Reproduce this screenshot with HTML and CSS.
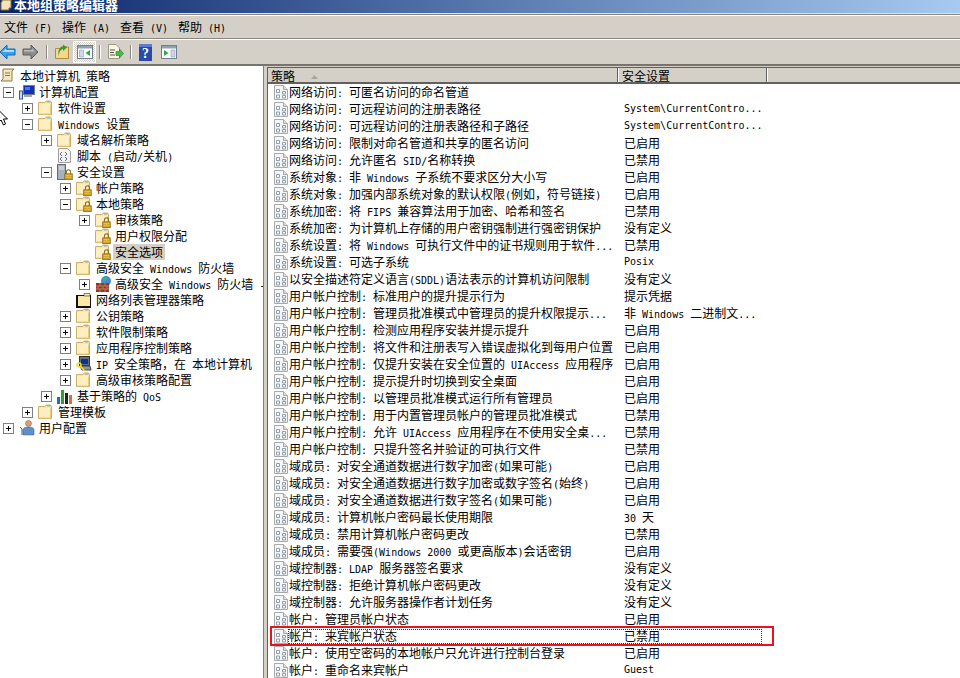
FILE: index.html
```html
<!DOCTYPE html>
<html lang="zh-CN">
<head>
<meta charset="utf-8">
<title>本地组策略编辑器</title>
<link rel="stylesheet" href="styles.css">
</head>
<body>
<svg class="defs" width="0" height="0" aria-hidden="true">
  <defs>
    <symbol id="folder" viewBox="0 0 16 16">
      <path d="M0.500 3.500V2.500H7L8 1H12.500L13.500 2.500V14.500H0.500Z" fill="#fbe7a8" stroke="#c9ad68"/>
      <path d="M1 4H13V14H1Z" fill="#fdefc0"/>
      <path d="M9 1.500H12.500V2.500H9Z" fill="#6fa8dc"/>
      <path d="M12.500 4.500V14H1.500" fill="none" stroke="#ecca78"/>
    </symbol>
    <symbol id="lock" viewBox="0 0 13 16">
      <path d="M3.500 7V4A3 3 0 0 1 9.500 4V7" fill="none" stroke="#8a6a1a" stroke-width="1.500"/>
      <rect x="1" y="7" width="11" height="8.500" fill="#cfa02a" stroke="#7f6010"/>
      <path d="M2.500 9.500H10.500M2.500 12H10.500" stroke="#f0d060"/>
    </symbol>
    <symbol id="policy" viewBox="0 0 16 16">
      <path d="M1.500 0.500H10.500L14.500 4.500V14.500H1.500Z" fill="#f6f6f6" stroke="#a9a9a9"/>
      <path d="M10.500 0.500V4.500H14.500" fill="#ddd" stroke="#a9a9a9"/>
      <path d="M3.500 4.500H6.500V7.500H3.500ZM3.500 10H6.500V13H3.500ZM9.500 6.500H12.500V9H9.500ZM9.500 10.500H12.500V13H9.500Z" fill="#fff" stroke="#8f9cae"/>
    </symbol>
  </defs>
</svg>

<header class="titlebar">
  <svg class="title-icon" width="12" height="11" viewBox="0 0 12 11"><path d="M2 0H11V8H9V10H1V2H2Z" fill="#f3e5b8" stroke="#8a6d3b"/></svg>
  <span class="title-text">本地组策略编辑器</span>
</header>

<nav class="menubar">
  <span class="menu-item">文件<span class="lat"> (F)</span></span>
  <span class="menu-item">操作<span class="lat"> (A)</span></span>
  <span class="menu-item">查看<span class="lat"> (V)</span></span>
  <span class="menu-item">帮助<span class="lat"> (H)</span></span>
</nav>

<div class="toolbar">
  <svg class="tool tool-nav" width="16" height="16" viewBox="0 0 16 16"><path d="M0 8L7 1V5H15V11H7V15Z" fill="#3aa0ea" stroke="#0f6cb8"/><path d="M2 8L6 4.500V6H14V8Z" fill="#a8dcfa"/></svg>
  <svg class="tool tool-nav" width="16" height="16" viewBox="0 0 16 16"><path d="M16 8L9 1V5H1V11H9V15Z" fill="#8c8c8c" stroke="#5d5d5d"/><path d="M2 6H10V4.500L13 7.500H2Z" fill="#bdbdbd"/></svg>
  <span class="tool-sep"></span>
  <svg class="tool" width="16" height="16" viewBox="0 0 16 16"><path d="M1.500 4.500H7V3H14.500V14.500H1.500Z" fill="#f4d78a" stroke="#b08d3e"/><path d="M5 12C5 8 6 6 9 5V7L13 3.500L9 0.500V2.500C5 3.500 3.500 7 5 12Z" fill="#2f9e2f"/></svg>
  <span class="tool-active">
    <svg width="16" height="16" viewBox="0 0 16 16"><rect x="0.500" y="1.500" width="15" height="13" fill="#fff" stroke="#6f7f8f"/><path d="M1 2H15V4.500H1Z" fill="#8fa3b5"/><path d="M2.500 6H6.500V13H2.500Z" fill="#cdd9e5" stroke="#7d8fa1" stroke-width="0.500"/><path d="M13 6V12L8.500 9Z" fill="#2ea84a"/></svg>
  </span>
  <span class="tool-sep"></span>
  <svg class="tool tool-export" width="17" height="16" viewBox="0 0 17 16"><path d="M1.500 0.500H9L12.500 4V14.500H1.500Z" fill="#fbf6e0" stroke="#9a9a86"/><path d="M3 6H8M3 8.500H7M3 11H8" stroke="#555"/><path d="M9 7.500H12.500V5L16.500 9.500L12.500 14V11.500H9Z" fill="#4cb84c" stroke="#2f8f2f" stroke-width="0.700"/></svg>
  <span class="tool-sep"></span>
  <svg class="tool tool-help" width="13" height="17" viewBox="0 0 13 17"><rect width="13" height="17" fill="#2b4aa8"/><path d="M0 0H13V3H0Z" fill="#5b7bd0"/><text class="help-glyph" x="6.500" y="14" text-anchor="middle">?</text></svg>
  <svg class="tool tool-action" width="16" height="16" viewBox="0 0 16 16"><rect x="0.500" y="1.500" width="15" height="13" fill="#fff" stroke="#6f7f8f"/><path d="M1 2H15V4.500H1Z" fill="#8fa3b5"/><path d="M10 6H14V13H10Z" fill="#cdd9e5" stroke="#7d8fa1" stroke-width="0.500"/><path d="M3 6V12L7.500 9Z" fill="#2ea84a"/></svg>
</div>

<main class="panes">
  <section class="tree">
    <div class="node l-root"><span class="ico"><svg width="15" height="15" viewBox="0 0 15 15"><path d="M3 1H14L12 3V13H1L3 11Z" fill="#f3e6bd" stroke="#8a7a4d"/><path d="M5 5H10M5 7.500H10" stroke="#8a7a4d"/></svg></span><span class="label">本地计算机<span class="lat"> </span>策略</span></div>
    <div class="node l1"><span class="exp minus"></span><span class="ico"><svg width="16" height="16" viewBox="0 0 16 16"><rect x="0.500" y="7" width="3" height="8" fill="#cfd8e3" stroke="#335b99"/><rect x="4.500" y="1.500" width="11" height="9" fill="#1230b8" stroke="#6f7f8f"/><path d="M6 3H11V6H6Z" fill="#3f7ff0"/><path d="M7 11H13V13H5V11Z" fill="#9aa7b5"/></svg></span><span class="label">计算机配置</span></div>
    <div class="node l2"><span class="exp plus"></span><span class="ico"><svg width="16" height="16"><use href="#folder"/></svg></span><span class="label">软件设置</span></div>
    <div class="node l2"><span class="exp minus"></span><span class="ico"><svg width="16" height="16"><use href="#folder"/></svg></span><span class="label"><span class="lat">Windows </span>设置</span></div>
    <div class="node l3"><span class="exp plus"></span><span class="ico"><svg width="16" height="16"><use href="#folder"/></svg></span><span class="label">域名解析策略</span></div>
    <div class="node l3"><span class="exp none"></span><span class="ico"><svg width="16" height="16" viewBox="0 0 16 16"><path d="M1.500 0.500H10.500L13.500 3.500V14.500H1.500Z" fill="#f3f3f3" stroke="#a0a0a0"/><path d="M5 4L3 6L5 8M8 4L10 6L8 8M5 9L3 11L5 13M8 9L10 11L8 13" fill="none" stroke="#5f6f8f"/></svg></span><span class="label">脚本<span class="lat"> (</span>启动<span class="lat">/</span>关机<span class="lat">)</span></span></div>
    <div class="node l3"><span class="exp minus"></span><span class="ico lockable"><svg width="9" height="16" viewBox="0 0 9 16"><rect x="0.500" y="0.500" width="8" height="15" fill="#a8b0ba" stroke="#5f6a76"/><path d="M2 3H7M2 5H7" stroke="#e8eef4"/></svg><svg class="lock" width="9" height="11"><use href="#lock"/></svg></span><span class="label">安全设置</span></div>
    <div class="node l4"><span class="exp plus"></span><span class="ico lockable"><svg width="16" height="16"><use href="#folder"/></svg><svg class="lock" width="9" height="11"><use href="#lock"/></svg></span><span class="label">帐户策略</span></div>
    <div class="node l4"><span class="exp minus"></span><span class="ico lockable"><svg width="16" height="16"><use href="#folder"/></svg><svg class="lock" width="9" height="11"><use href="#lock"/></svg></span><span class="label">本地策略</span></div>
    <div class="node l5"><span class="exp plus"></span><span class="ico lockable"><svg width="16" height="16"><use href="#folder"/></svg><svg class="lock" width="9" height="11"><use href="#lock"/></svg></span><span class="label">审核策略</span></div>
    <div class="node l5"><span class="exp none"></span><span class="ico lockable"><svg width="16" height="16"><use href="#folder"/></svg><svg class="lock" width="9" height="11"><use href="#lock"/></svg></span><span class="label">用户权限分配</span></div>
    <div class="node l5"><span class="exp none"></span><span class="ico lockable"><svg width="16" height="16"><use href="#folder"/></svg><svg class="lock" width="9" height="11"><use href="#lock"/></svg></span><span class="label selected">安全选项</span></div>
    <div class="node l4"><span class="exp minus"></span><span class="ico"><svg width="16" height="16"><use href="#folder"/></svg></span><span class="label">高级安全<span class="lat"> Windows </span>防火墙</span></div>
    <div class="node l5"><span class="exp plus"></span><span class="ico"><svg width="18" height="16" viewBox="0 0 18 16"><circle cx="11" cy="5" r="5" fill="#3c8fd8"/><path d="M8 2L12 1L11 5L8 5Z" fill="#52b04a"/><path d="M1 7H14V16H1Z" fill="#8a3a2a"/><path d="M1 10H14M1 13H14M5 7V10M10 7V10M3 10V13M8 10V13M12 10V13M5 13V16M10 13V16" stroke="#c77a5a"/></svg></span><span class="label">高级安全<span class="lat"> Windows </span>防火墙<span class="lat"> - </span>本地组策略对象</span></div>
    <div class="node l4"><span class="exp none"></span><span class="ico"><svg width="16" height="16" viewBox="0 0 16 16"><path d="M0 3H15V16H0Z" fill="#111"/><path d="M2 4H14V14H2Z" fill="#fbe7a8"/><path d="M8 1.500H14V4H8Z" fill="#fbe7a8" stroke="#111" stroke-width="0.500"/></svg></span><span class="label">网络列表管理器策略</span></div>
    <div class="node l4"><span class="exp plus"></span><span class="ico"><svg width="16" height="16"><use href="#folder"/></svg></span><span class="label">公钥策略</span></div>
    <div class="node l4"><span class="exp plus"></span><span class="ico"><svg width="16" height="16"><use href="#folder"/></svg></span><span class="label">软件限制策略</span></div>
    <div class="node l4"><span class="exp plus"></span><span class="ico"><svg width="16" height="16"><use href="#folder"/></svg></span><span class="label">应用程序控制策略</span></div>
    <div class="node l4"><span class="exp plus"></span><span class="ico"><svg width="16" height="16" viewBox="0 0 16 16"><rect x="3.500" y="0.500" width="10" height="9" fill="#5f6f7f" stroke="#333"/><rect x="5" y="3" width="7" height="5" fill="#10308a"/><path d="M4 10H14L15 14H6Z" fill="#8f979f" stroke="#444"/><circle cx="3" cy="9" r="2" fill="none" stroke="#f4e020" stroke-width="1.500"/><path d="M4.500 10.500L9 15" stroke="#f4e020" stroke-width="1.500"/></svg></span><span class="label"><span class="lat">IP </span>安全策略，在<span class="lat"> </span>本地计算机</span></div>
    <div class="node l4"><span class="exp plus"></span><span class="ico"><svg width="16" height="16"><use href="#folder"/></svg></span><span class="label">高级审核策略配置</span></div>
    <div class="node l3"><span class="exp plus"></span><span class="ico"><svg width="16" height="16" viewBox="0 0 16 16"><rect x="0" y="9" width="3" height="7" fill="#1a6fc0"/><rect x="4" y="2" width="3" height="14" fill="#2e9e3a"/><rect x="8" y="5" width="3" height="11" fill="#222"/><rect x="12" y="7" width="3" height="9" fill="#e86a3a"/></svg></span><span class="label">基于策略的<span class="lat"> QoS</span></span></div>
    <div class="node l2"><span class="exp plus"></span><span class="ico"><svg width="16" height="16"><use href="#folder"/></svg></span><span class="label">管理模板</span></div>
    <div class="node l1"><span class="exp plus"></span><span class="ico"><svg width="16" height="16" viewBox="0 0 16 16"><circle cx="9.500" cy="3.500" r="3" fill="#d9a070" stroke="#7a5a3a" stroke-width="0.500"/><path d="M4 15V10Q4 7 9.500 7T15 10V15Z" fill="#5f8fc8" stroke="#335b99" stroke-width="0.500"/><path d="M1 7L3 9V15" fill="none" stroke="#335b99"/></svg></span><span class="label">用户配置</span></div>
  </section>

  <section class="list">
    <div class="list-head">
      <span class="th th-name">策略<svg class="sort" width="7" height="4" viewBox="0 0 7 4"><path d="M3.500 0L7 4H0Z" fill="#a8a59c"/></svg></span>
      <span class="th th-val">安全设置</span>
      <span class="th th-rest"></span>
    </div>
    <div class="rows">
      <div class="row"><svg class="pico"><use href="#policy"/></svg><span class="name">网络访问<span class="lat">: </span>可匿名访问的命名管道</span><span class="val"></span></div>
      <div class="row"><svg class="pico"><use href="#policy"/></svg><span class="name">网络访问<span class="lat">: </span>可远程访问的注册表路径</span><span class="val lat">System\CurrentContro...</span></div>
      <div class="row"><svg class="pico"><use href="#policy"/></svg><span class="name">网络访问<span class="lat">: </span>可远程访问的注册表路径和子路径</span><span class="val lat">System\CurrentContro...</span></div>
      <div class="row"><svg class="pico"><use href="#policy"/></svg><span class="name">网络访问<span class="lat">: </span>限制对命名管道和共享的匿名访问</span><span class="val">已启用</span></div>
      <div class="row"><svg class="pico"><use href="#policy"/></svg><span class="name">网络访问<span class="lat">: </span>允许匿名<span class="lat"> SID/</span>名称转换</span><span class="val">已禁用</span></div>
      <div class="row"><svg class="pico"><use href="#policy"/></svg><span class="name">系统对象<span class="lat">: </span>非<span class="lat"> Windows </span>子系统不要求区分大小写</span><span class="val">已启用</span></div>
      <div class="row"><svg class="pico"><use href="#policy"/></svg><span class="name">系统对象<span class="lat">: </span>加强内部系统对象的默认权限<span class="lat">(</span>例如，符号链接<span class="lat">)</span></span><span class="val">已启用</span></div>
      <div class="row"><svg class="pico"><use href="#policy"/></svg><span class="name">系统加密<span class="lat">: </span>将<span class="lat"> FIPS </span>兼容算法用于加密、哈希和签名</span><span class="val">已禁用</span></div>
      <div class="row"><svg class="pico"><use href="#policy"/></svg><span class="name">系统加密<span class="lat">: </span>为计算机上存储的用户密钥强制进行强密钥保护</span><span class="val">没有定义</span></div>
      <div class="row"><svg class="pico"><use href="#policy"/></svg><span class="name">系统设置<span class="lat">: </span>将<span class="lat"> Windows </span>可执行文件中的证书规则用于软件<span class="lat">...</span></span><span class="val">已禁用</span></div>
      <div class="row"><svg class="pico"><use href="#policy"/></svg><span class="name">系统设置<span class="lat">: </span>可选子系统</span><span class="val lat">Posix</span></div>
      <div class="row"><svg class="pico"><use href="#policy"/></svg><span class="name">以安全描述符定义语言<span class="lat">(SDDL)</span>语法表示的计算机访问限制</span><span class="val">没有定义</span></div>
      <div class="row"><svg class="pico"><use href="#policy"/></svg><span class="name">用户帐户控制<span class="lat">: </span>标准用户的提升提示行为</span><span class="val">提示凭据</span></div>
      <div class="row"><svg class="pico"><use href="#policy"/></svg><span class="name">用户帐户控制<span class="lat">: </span>管理员批准模式中管理员的提升权限提示<span class="lat">...</span></span><span class="val">非<span class="lat"> Windows </span>二进制文<span class="lat">...</span></span></div>
      <div class="row"><svg class="pico"><use href="#policy"/></svg><span class="name">用户帐户控制<span class="lat">: </span>检测应用程序安装并提示提升</span><span class="val">已启用</span></div>
      <div class="row"><svg class="pico"><use href="#policy"/></svg><span class="name">用户帐户控制<span class="lat">: </span>将文件和注册表写入错误虚拟化到每用户位置</span><span class="val">已启用</span></div>
      <div class="row"><svg class="pico"><use href="#policy"/></svg><span class="name">用户帐户控制<span class="lat">: </span>仅提升安装在安全位置的<span class="lat"> UIAccess </span>应用程序</span><span class="val">已启用</span></div>
      <div class="row"><svg class="pico"><use href="#policy"/></svg><span class="name">用户帐户控制<span class="lat">: </span>提示提升时切换到安全桌面</span><span class="val">已启用</span></div>
      <div class="row"><svg class="pico"><use href="#policy"/></svg><span class="name">用户帐户控制<span class="lat">: </span>以管理员批准模式运行所有管理员</span><span class="val">已启用</span></div>
      <div class="row"><svg class="pico"><use href="#policy"/></svg><span class="name">用户帐户控制<span class="lat">: </span>用于内置管理员帐户的管理员批准模式</span><span class="val">已禁用</span></div>
      <div class="row"><svg class="pico"><use href="#policy"/></svg><span class="name">用户帐户控制<span class="lat">: </span>允许<span class="lat"> UIAccess </span>应用程序在不使用安全桌<span class="lat">...</span></span><span class="val">已禁用</span></div>
      <div class="row"><svg class="pico"><use href="#policy"/></svg><span class="name">用户帐户控制<span class="lat">: </span>只提升签名并验证的可执行文件</span><span class="val">已禁用</span></div>
      <div class="row"><svg class="pico"><use href="#policy"/></svg><span class="name">域成员<span class="lat">: </span>对安全通道数据进行数字加密<span class="lat">(</span>如果可能<span class="lat">)</span></span><span class="val">已启用</span></div>
      <div class="row"><svg class="pico"><use href="#policy"/></svg><span class="name">域成员<span class="lat">: </span>对安全通道数据进行数字加密或数字签名<span class="lat">(</span>始终<span class="lat">)</span></span><span class="val">已启用</span></div>
      <div class="row"><svg class="pico"><use href="#policy"/></svg><span class="name">域成员<span class="lat">: </span>对安全通道数据进行数字签名<span class="lat">(</span>如果可能<span class="lat">)</span></span><span class="val">已启用</span></div>
      <div class="row"><svg class="pico"><use href="#policy"/></svg><span class="name">域成员<span class="lat">: </span>计算机帐户密码最长使用期限</span><span class="val"><span class="lat">30 </span>天</span></div>
      <div class="row"><svg class="pico"><use href="#policy"/></svg><span class="name">域成员<span class="lat">: </span>禁用计算机帐户密码更改</span><span class="val">已禁用</span></div>
      <div class="row"><svg class="pico"><use href="#policy"/></svg><span class="name">域成员<span class="lat">: </span>需要强<span class="lat">(Windows 2000 </span>或更高版本<span class="lat">)</span>会话密钥</span><span class="val">已启用</span></div>
      <div class="row"><svg class="pico"><use href="#policy"/></svg><span class="name">域控制器<span class="lat">: LDAP </span>服务器签名要求</span><span class="val">没有定义</span></div>
      <div class="row"><svg class="pico"><use href="#policy"/></svg><span class="name">域控制器<span class="lat">: </span>拒绝计算机帐户密码更改</span><span class="val">没有定义</span></div>
      <div class="row"><svg class="pico"><use href="#policy"/></svg><span class="name">域控制器<span class="lat">: </span>允许服务器操作者计划任务</span><span class="val">没有定义</span></div>
      <div class="row"><svg class="pico"><use href="#policy"/></svg><span class="name">帐户<span class="lat">: </span>管理员帐户状态</span><span class="val">已启用</span></div>
      <div class="row row-focus"><svg class="pico"><use href="#policy"/></svg><span class="name">帐户<span class="lat">: </span>来宾帐户状态</span><span class="val">已禁用</span></div>
      <div class="row"><svg class="pico"><use href="#policy"/></svg><span class="name">帐户<span class="lat">: </span>使用空密码的本地帐户只允许进行控制台登录</span><span class="val">已启用</span></div>
      <div class="row"><svg class="pico"><use href="#policy"/></svg><span class="name">帐户<span class="lat">: </span>重命名来宾帐户</span><span class="val lat">Guest</span></div>
    </div>
  </section>
</main>

<div class="red-box"></div>
<svg class="cursor" width="9" height="16" viewBox="0 0 9 16"><path d="M-1 0.500L7.500 9H3.500L5.500 14L3.500 15L1 10L-1 12Z" fill="#fff" stroke="#000"/></svg>
</body>
</html>
```

FILE: styles.css
```css
* { box-sizing: border-box; }
html, body { margin: 0; padding: 0; }
body {
  width: 960px;
  height: 678px;
  overflow: hidden;
  position: relative;
  background: #d4d0c8;
  color: #000;
  font: 12px/16px "Noto Sans CJK SC", "Liberation Sans", sans-serif;
  display: flex;
  flex-direction: column;
}
.defs { position: absolute; }
.lat { font-family: "DejaVu Sans Mono", "Liberation Mono", monospace; font-size: 10px; line-height: 10px; white-space: pre; }

.titlebar {
  height: 14px;
  flex: none;
  display: flex;
  align-items: flex-start;
  overflow: hidden;
  background: linear-gradient(90deg, #0a246a, #a6caf0);
  border-bottom: 1px solid #e4e2dc;
  color: #fff;
  font-weight: 700;
}
.title-icon { flex: none; margin-right: 2px; }
.title-text { font-size: 13px; line-height: 10px; height: 13px; white-space: nowrap; }

.menubar {
  height: 25px;
  flex: none;
  display: flex;
  align-items: center;
  padding: 1px 0 0 4px;
  gap: 9px;
  background: #d4d0c8;
  border-top: 1px solid #8a8580;
  border-bottom: 1px solid #8a8580;
  box-shadow: inset 0 1px 0 #fff;
}
.menu-item { width: 49px; white-space: nowrap; }

.toolbar {
  height: 27px;
  flex: none;
  display: flex;
  align-items: center;
  background: #d4d0c8;
  border-top: 1px solid #fff;
  border-bottom: 2px solid #77746e;
}
.tool { flex: none; }
.tool-nav { margin-right: 6px; }
.tool-sep { width: 1px; height: 14px; background: #8a8880; box-shadow: 1px 0 0 #fff; margin: 0 7px 0 2px; flex: none; }
.tool-active {
  width: 23px;
  height: 22px;
  margin: 0 1px 0 3px;
  flex: none;
  display: flex;
  align-items: center;
  justify-content: center;
  border: 1px solid #fff;
  background: repeating-conic-gradient(#ffffff 0 25%, #d4d0c8 0 50%) 0 0 / 2px 2px;
}
.tool-export { margin-right: 4px; }
.tool-help { margin-left: 1px; }
.tool-action { margin-left: 9px; }

.panes { flex: 1; display: flex; min-height: 0; gap: 3px; }

.tree {
  width: 264px;
  flex: none;
  background: #fff;
  overflow: hidden;
  padding-top: 2px;
  border-right: 1px solid #808080;
}
.node { height: 16px; display: flex; align-items: center; white-space: nowrap; }
.l-root { padding-left: 0; }
.l-root .ico { width: 18px; }
.l1 { padding-left: 0; }
.l2 { padding-left: 19px; }
.l3 { padding-left: 38px; }
.l4 { padding-left: 57px; }
.l5 { padding-left: 76px; }
.exp {
  width: 19px;
  height: 16px;
  flex: none;
  position: relative;
}
.exp.plus::before, .exp.minus::before {
  content: "";
  position: absolute;
  left: 3px;
  top: 3px;
  width: 9px;
  height: 9px;
  border: 1px solid #808080;
  background: linear-gradient(#000, #000) center / 5px 1px no-repeat, #fff;
}
.exp.plus::before {
  background: linear-gradient(#000, #000) center / 5px 1px no-repeat, linear-gradient(#000, #000) center / 1px 5px no-repeat, #fff;
}
.ico { width: 18px; height: 16px; flex: none; display: flex; position: relative; }
.lock { position: absolute; left: 7px; top: 5px; }
.label { padding: 0 2px; line-height: 16px; height: 16px; }
.selected { background: #d4d0c8; }

.list {
  flex: 1;
  min-width: 0;
  background: #fff;
  border-left: 1px solid #606060;
  border-top: 1px solid #606060;
  margin-top: 1px;
  overflow: hidden;
}
.list-head {
  height: 16px;
  display: flex;
  background: #d4d0c8;
  border-bottom: 2px solid #606060;
}
.th { height: 14px; line-height: 15px; border-right: 1px solid #606060; box-shadow: 1px 0 0 #fff; padding-left: 3px; white-space: nowrap; flex: none; }
.th-name { width: 350px; }
.th-val { width: 149px; padding-left: 4px; }
.th-rest { flex: 1; border-right: 0; box-shadow: none; }
.sort { margin: 0 0 2px 16px; }

.row { height: 17px; display: flex; align-items: flex-start; padding-left: 5px; white-space: nowrap; }
.pico { width: 16px; height: 16px; flex: none; margin-top: 1px; }
.name { width: 335px; flex: none; overflow: hidden; height: 17px; line-height: 15px; }
.val { flex: none; height: 17px; line-height: 15px; }
.row-focus { position: relative; }
.row-focus::after {
  content: "";
  position: absolute;
  left: 20px;
  right: 198px;
  top: 1px;
  bottom: 1px;
  border: 1px dotted #333;
}

.red-box {
  position: absolute;
  left: 270px;
  top: 626px;
  width: 504px;
  height: 20px;
  border: 2px solid #e8141c;
}
.cursor { position: absolute; left: 0; top: 110px; }
.help-glyph { font: 700 14px "Liberation Serif", serif; fill: #fff; }
```
